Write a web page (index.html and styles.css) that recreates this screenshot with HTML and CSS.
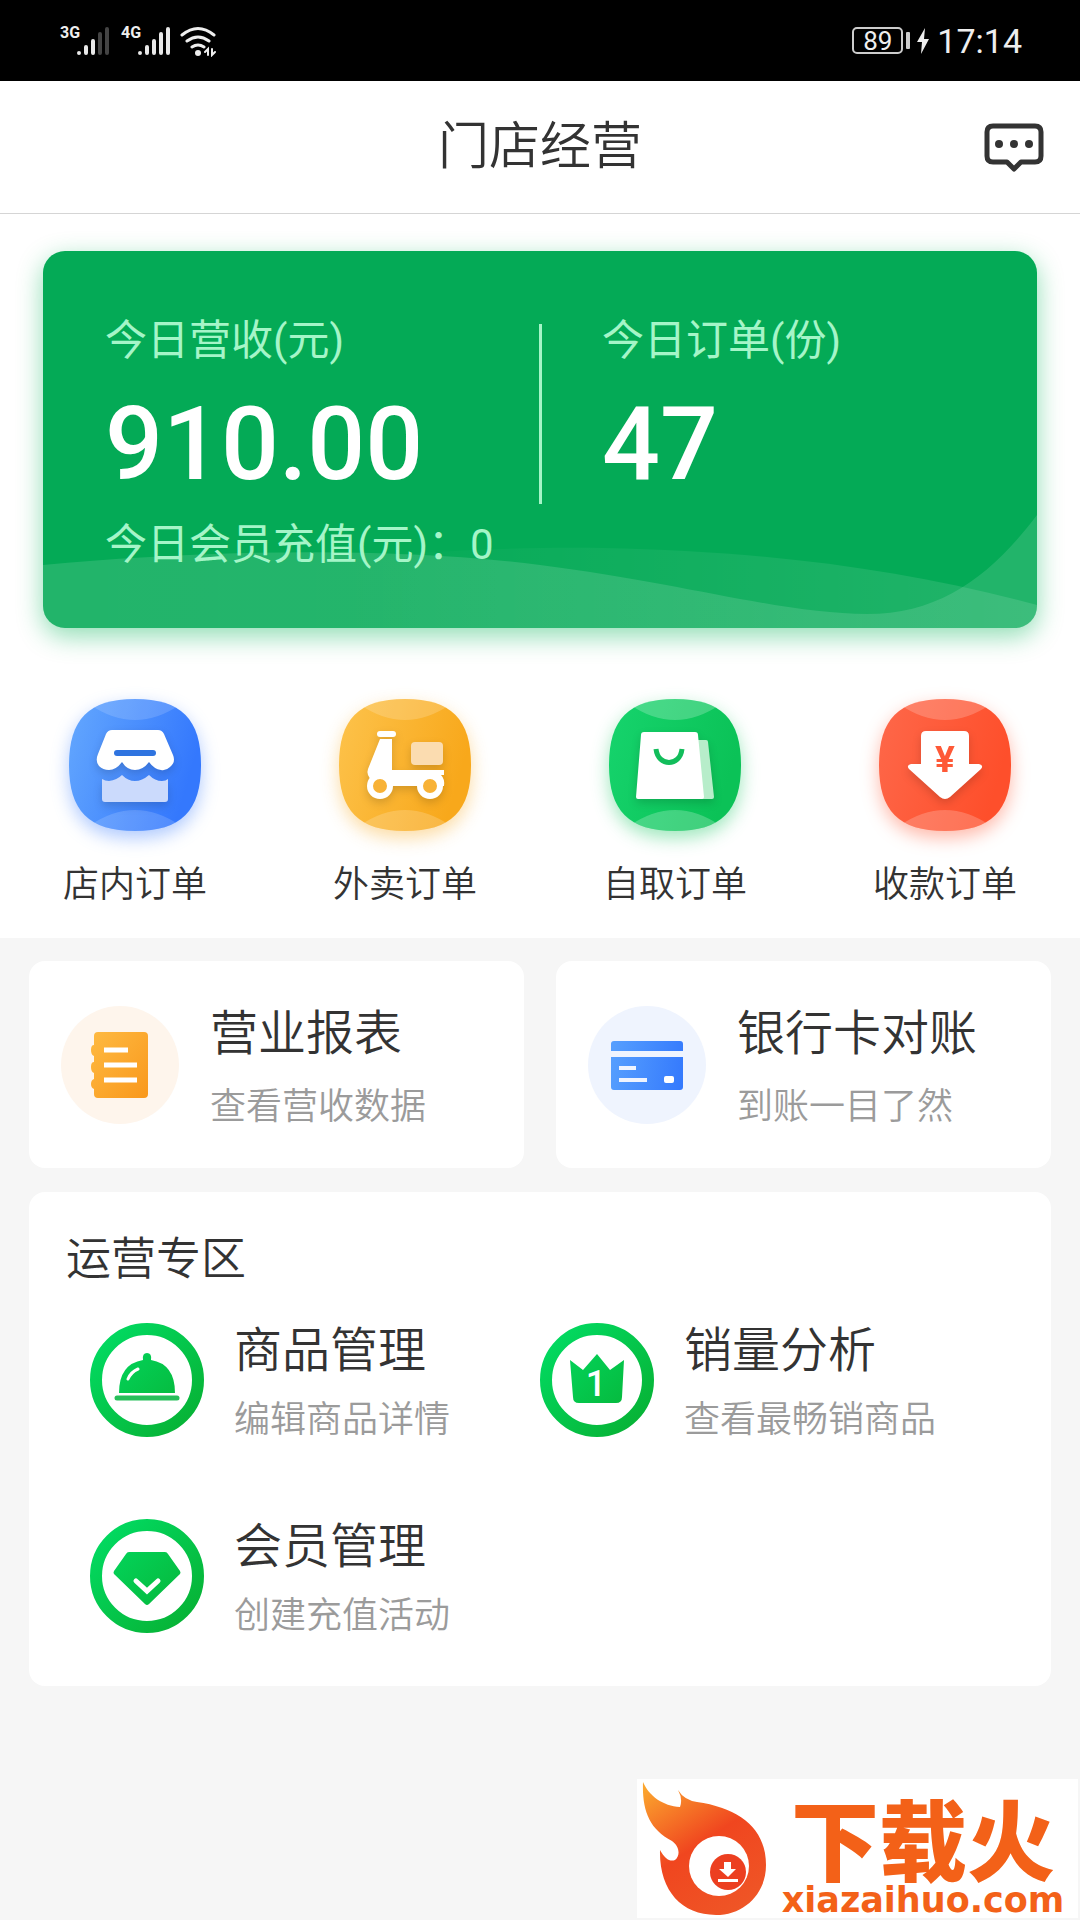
FILE: index.html
```html
<!DOCTYPE html>
<html lang="zh-CN">
<head>
    <meta charset="UTF-8">
    <meta name="viewport" content="width=device-width, initial-scale=1.0">
    <title>门店经营</title>
    <link rel="stylesheet" href="styles.css">
</head>
<body>

    <div class="status-bar">
        <div class="status-group">
            <span class="network">3G</span>
            <svg class="signal" width="32" height="32" viewBox="0 0 32 32" stroke-width="4" stroke-linecap="round">
                <path stroke="#e8e8e8" d="M2 28v0M9 22v6M16 16v12"/>
                <path stroke="#444" d="M23 9v19M30 4v24"/>
            </svg>
            <span class="network">4G</span>
            <svg class="signal" width="32" height="32" viewBox="0 0 32 32" stroke-width="4" stroke-linecap="round">
                <path stroke="#e8e8e8" d="M2 28v0M9 22v6M16 16v12M23 9v19M30 4v24"/>
            </svg>
            <svg width="38" height="32" viewBox="0 0 38 32" fill="none" stroke="#eee" stroke-width="3" stroke-linecap="round">
                <path d="M3 10q16-13 32 0M8 16q11-8 22 0M13 22q6-4 12 0"/>
                <circle cx="19" cy="28" r="3" fill="#eee" stroke="none"/>
                <path stroke-width="2" d="M29 30v-6l-3 3M33 24v6l3-3"/>
            </svg>
        </div>
        <div class="status-group">
            <span class="battery">89</span>
            <span class="battery-tip"></span>
            <svg width="12" height="26" viewBox="0 0 12 26"><path fill="#eee" d="M8 0 0 14h5L4 26l8-15H7z"/></svg>
            <span class="clock">17:14</span>
        </div>
    </div>

    <header class="header">
        <h1>门店经营</h1>
        <button class="message-btn" aria-label="消息">
            <svg width="60" height="49" viewBox="0 0 60 49" fill="none" stroke="#333" stroke-width="5" stroke-linejoin="round">
                <path d="M9 3h42q6 0 6 6v24q0 6-6 6H37l-7 7-7-7H9q-6 0-6-6V9q0-6 6-6z"/>
                <g fill="#333" stroke="none"><circle cx="15" cy="21" r="4"/><circle cx="30" cy="21" r="4"/><circle cx="45" cy="21" r="4"/></g>
            </svg>
        </button>
    </header>

    <section class="overview">
        <div class="summary">
            <svg class="waves" viewBox="0 0 994 377" preserveAspectRatio="none">
                <defs>
                    <linearGradient id="waveA"><stop offset="0" stop-color="#fff" stop-opacity=".12"/><stop offset=".5" stop-color="#fff" stop-opacity=".13"/><stop offset="1" stop-color="#fff" stop-opacity=".12"/></linearGradient>
                    <linearGradient id="waveB"><stop offset="0" stop-color="#fff" stop-opacity="0"/><stop offset="1" stop-color="#fff" stop-opacity=".12"/></linearGradient>
                </defs>
                <path fill="url(#waveA)" d="M0 314C150 300 340 294 497 314C640 332 740 363 824 363C900 363 950 322 994 264V377H0z"/>
                <path fill="url(#waveB)" d="M300 310C380 299 480 296 560 297C720 300 860 318 994 354V377H300z"/>
            </svg>
            <div class="stats">
                <div class="stat">
                    <p class="stat-label">今日营收(元)</p>
                    <p class="stat-value">910.00</p>
                </div>
                <div class="stat">
                    <p class="stat-label">今日订单(份)</p>
                    <p class="stat-value">47</p>
                </div>
            </div>
            <p class="stat-label recharge">今日会员充值(元)：0</p>
        </div>

        <nav class="quick">
            <a class="quick-item" href="#">
                <svg class="tile tile-blue" viewBox="0 0 132 132">
                    <defs>
                        <clipPath id="tile"><path d="M66 0C112 0 132 20 132 66S112 132 66 132 0 112 0 66 20 0 66 0z"/></clipPath>
                        <linearGradient id="blue" y2=".3"><stop offset="0" stop-color="#64a8fe"/><stop offset="1" stop-color="#3478fd"/></linearGradient>
                    </defs>
                    <g clip-path="url(#tile)">
                        <path fill="url(#blue)" d="M0 0h132v132H0z"/>
                        <path fill="#fff" fill-opacity=".15" d="M20 5Q66 37 112 5V0H20zM20 127Q66 95 112 127v5H20z"/>
                    </g>
                    <g class="glyph">
                        <path fill="#cbdafc" d="M33 80q3 2 7 2 8-1 13-6 6 6 13 6t14-6q6 6 13 6 4 0 6-2v20q0 3-3 3H36q-3 0-3-3z"/>
                        <path fill="#fff" d="M43 31h46q4 0 6 4l9 21q3 7-3 12-4 4-9 3-7-1-12-8-6 8-14 8t-13-8q-6 8-13 8-6 0-10-4-4-5-1-12l8-20q2-4 6-4z"/>
                        <path stroke="#2f74e0" stroke-width="6" stroke-linecap="round" d="M48 54h36"/>
                    </g>
                </svg>
                <span>店内订单</span>
            </a>
            <a class="quick-item" href="#">
                <svg class="tile tile-yellow" viewBox="0 0 132 132">
                    <defs><linearGradient id="yellow" y2=".3"><stop offset="0" stop-color="#fdc34c"/><stop offset="1" stop-color="#f8a81b"/></linearGradient></defs>
                    <g clip-path="url(#tile)">
                        <path fill="url(#yellow)" d="M0 0h132v132H0z"/>
                        <path fill="#fff" fill-opacity=".18" d="M20 5Q66 37 112 5V0H20zM20 127Q66 95 112 127v5H20z"/>
                    </g>
                    <g class="glyph">
                        <rect x="38" y="32" width="19" height="6" rx="3" fill="#fff"/>
                        <rect x="72" y="43" width="32" height="23" rx="4" fill="#fbdcb0"/>
                        <path fill="#fff" d="M41 40h12v31h52v5h-3q4 4 3 11H35l-6-11q-1-4 0-6z"/>
                        <g fill="#f8b236" stroke="#fff" stroke-width="6"><circle cx="41" cy="87" r="10"/><circle cx="91" cy="87" r="10"/></g>
                    </g>
                </svg>
                <span>外卖订单</span>
            </a>
            <a class="quick-item" href="#">
                <svg class="tile tile-green" viewBox="0 0 132 132">
                    <defs><linearGradient id="green" y2=".3"><stop offset="0" stop-color="#16d46d"/><stop offset="1" stop-color="#0bc257"/></linearGradient></defs>
                    <g clip-path="url(#tile)">
                        <path fill="url(#green)" d="M0 0h132v132H0z"/>
                        <path fill="#fff" fill-opacity=".22" d="M20 5Q66 37 112 5V0H20zM20 127Q66 95 112 127v5H20z"/>
                    </g>
                    <g class="glyph">
                        <path fill="#b7edca" d="M88 41h9q2 0 2 2l6 55q0 2-2 2H88z"/>
                        <path fill="#fff" d="M35 33h51q3 0 3 3l6 62q0 2-2 2H29q-2 0-2-2l5-62q0-3 3-3z"/>
                        <path fill="none" stroke="#12bd5b" stroke-width="5" d="M47 50c2 18 24 18 26 0"/>
                    </g>
                </svg>
                <span>自取订单</span>
            </a>
            <a class="quick-item" href="#">
                <svg class="tile tile-red" viewBox="0 0 132 132">
                    <defs><linearGradient id="red" y2=".3"><stop offset="0" stop-color="#fe684a"/><stop offset="1" stop-color="#fe4f2b"/></linearGradient></defs>
                    <g clip-path="url(#tile)">
                        <path fill="url(#red)" d="M0 0h132v132H0z"/>
                        <path fill="#fff" fill-opacity=".2" d="M20 5Q66 37 112 5V0H20zM20 127Q66 95 112 127v5H20z"/>
                    </g>
                    <g class="glyph">
                        <path fill="#fff" d="M47 32h38q5 0 5 5v28h10q5 1 2 5L71 98q-5 4-10 0L30 70q-3-4 2-5h10V37q0-5 5-5z"/>
                        <text class="yen" x="66" y="73" text-anchor="middle">¥</text>
                    </g>
                </svg>
                <span>收款订单</span>
            </a>
        </nav>
    </section>

    <main class="content">
        <div class="reports">
            <a class="report" href="#">
                <svg class="report-icon" viewBox="0 0 119 119">
                    <defs><linearGradient id="book" x2="1" y2="1"><stop offset="0" stop-color="#feba42"/><stop offset="1" stop-color="#f9981c"/></linearGradient></defs>
                    <circle cx="60" cy="60" r="59" fill="#fef5ec"/>
                    <path fill="url(#book)" d="M38 27h46q4 0 4 4v58q0 4-4 4H38q-4 0-4-4v-5q-3-1-3-5t3-5v-6q-3-1-3-6t3-5v-6q-3-1-3-6t3-5v-9q0-4 4-4z"/>
                    <path stroke="#fff" stroke-width="5" d="M44 45h24M44 60h33M44 75h33"/>
                </svg>
                <div>
                    <h2>营业报表</h2>
                    <p>查看营收数据</p>
                </div>
            </a>
            <a class="report" href="#">
                <svg class="report-icon" viewBox="0 0 119 119">
                    <defs><linearGradient id="card" gradientUnits="userSpaceOnUse" x1="24" y1="60" x2="96" y2="70"><stop offset="0" stop-color="#559efe"/><stop offset="1" stop-color="#357afd"/></linearGradient></defs>
                    <circle cx="60" cy="60" r="59" fill="#eff4fe"/>
                    <path fill="url(#card)" d="M27 36h66q3 0 3 3v7H24v-7q0-3 3-3zM24 52h72v30q0 3-3 3H27q-3 0-3-3z"/>
                    <path stroke="#eff4fe" stroke-width="4" d="M32 63h17M32 75h28"/>
                    <rect x="77" y="71" width="10" height="7" rx="2" fill="#fff"/>
                </svg>
                <div>
                    <h2>银行卡对账</h2>
                    <p>到账一目了然</p>
                </div>
            </a>
        </div>

        <section class="operations">
            <h3>运营专区</h3>
            <div class="operation-list">
                <a class="operation" href="#">
                    <svg class="operation-icon" viewBox="0 0 114 114">
                        <defs><linearGradient id="ring" gradientUnits="userSpaceOnUse" x1="15" y1="15" x2="99" y2="99"><stop offset="0" stop-color="#02d960"/><stop offset="1" stop-color="#07b336"/></linearGradient></defs>
                        <circle cx="57" cy="57" r="51" fill="none" stroke="url(#ring)" stroke-width="12"/>
                        <path fill="url(#ring)" d="M29 70q0-29 24-33-1-7 4-7t4 7q24 4 24 33z"/>
                        <path stroke="#27bf5a" stroke-width="5" stroke-linecap="round" d="M27 75h60"/>
                        <path fill="none" stroke="#fff" stroke-width="3" stroke-linecap="round" d="M38 56q3-7 10-10"/>
                    </svg>
                    <div>
                        <h2>商品管理</h2>
                        <p>编辑商品详情</p>
                    </div>
                </a>
                <a class="operation" href="#">
                    <svg class="operation-icon" viewBox="0 0 114 114">
                        <circle cx="57" cy="57" r="51" fill="none" stroke="url(#ring)" stroke-width="12"/>
                        <path fill="url(#ring)" d="m30 37 13 10L57 31l13 16 14-10-2 37q0 6-6 6H39q-6 0-6-6z"/>
                        <text class="rank" x="56" y="73" text-anchor="middle">1</text>
                    </svg>
                    <div>
                        <h2>销量分析</h2>
                        <p>查看最畅销商品</p>
                    </div>
                </a>
                <a class="operation" href="#">
                    <svg class="operation-icon" viewBox="0 0 114 114">
                        <circle cx="57" cy="57" r="51" fill="none" stroke="url(#ring)" stroke-width="12"/>
                        <path fill="url(#ring)" d="M39 33h36q2 0 3 2l12 17q1 2 0 3L59 85q-2 2-4 0L24 55q-1-1 0-3l12-17q1-2 3-2z"/>
                        <path fill="none" stroke="#fff" stroke-width="5" stroke-linecap="round" d="m46 62 11 10 11-10"/>
                    </svg>
                    <div>
                        <h2>会员管理</h2>
                        <p>创建充值活动</p>
                    </div>
                </a>
            </div>
        </section>
    </main>

    <footer class="brand">
        <svg width="131" height="139" viewBox="0 0 131 139">
            <defs>
                <linearGradient id="flame" x1=".1" y1="0" x2=".7" y2="1">
                    <stop offset="0" stop-color="#fba52e"/><stop offset=".5" stop-color="#f0461f"/><stop offset="1" stop-color="#ef5526"/>
                </linearGradient>
            </defs>
            <path fill="url(#flame)" d="M6 3C12 17 26 27 43 28Q46 20 41 11Q47 21 60 23C102 29 129 49 129 86C129 115 107 136 79 136C44 136 22 111 23 71C28 80 33 83 38 81C44 76 42 67 35 62C12 50 5 31 6 3z"/>
            <circle cx="82" cy="87" r="30" fill="#fff"/>
            <circle cx="91" cy="93" r="18" fill="#ec3f20"/>
            <path fill="#fff" d="M87 83h7v7h5l-8 8-9-8h5zM81 100h20v3H81z"/>
        </svg>
        <div class="brand-text">
            <span class="brand-name">下载火</span>
            <span class="brand-domain">xiazaihuo.com</span>
        </div>
    </footer>

</body>
</html>
```
FILE: styles.css
```css
* {
    box-sizing: border-box;
}

body {
    margin: 0;
    min-height: 100vh;
    display: flex;
    flex-direction: column;
    background-color: #f6f6f6;
    color: #333;
    font-family: Roboto, 'Noto Sans CJK SC', sans-serif;
    font-weight: 350;
}

h1, h2, h3, p {
    margin: 0;
    font-weight: inherit;
}

a {
    color: inherit;
    text-decoration: none;
}

svg {
    display: block;
    flex-shrink: 0;
}

/* Status bar */
.status-bar {
    display: flex;
    justify-content: space-between;
    align-items: center;
    height: 81px;
    padding: 0 58px 0 60px;
    background-color: #000;
    color: #eee;
    font-weight: 400;
}

.status-group {
    display: flex;
    align-items: center;
}

.network {
    width: 17px;
    margin-bottom: 16px;
    font-size: 16px;
    line-height: 16px;
    font-weight: 700;
}

.signal {
    margin-right: 12px;
}

.signal + svg {
    margin-left: -3px;
}

.battery {
    width: 51px;
    height: 27px;
    border: 2px solid #ccc;
    border-radius: 5px;
    font-size: 26px;
    line-height: 24px;
    text-align: center;
}

.battery-tip {
    width: 4px;
    height: 17px;
    margin: 0 7px 0 3px;
    border-radius: 1px;
    background-color: #ccc;
}

.clock {
    margin-left: 8px;
    font-size: 34px;
    line-height: 40px;
}

/* Header */
.header {
    display: grid;
    grid-template-columns: 1fr auto 1fr;
    align-items: center;
    height: 133px;
    padding: 0 36px;
    background-color: #fff;
    border-bottom: 1px solid #d5d5d5;
}

.header h1 {
    grid-column: 2;
    font-size: 51px;
    line-height: 60px;
}

.message-btn {
    justify-self: end;
    padding: 0;
    border: none;
    background: none;
    cursor: pointer;
}

/* Today's figures */
.overview {
    padding: 37px 0 32px;
    background-color: #fff;
}

.summary {
    position: relative;
    margin: 0 43px;
    padding: 65px 0 58px;
    border-radius: 22px;
    background-color: #04aa56;
    box-shadow: 0 8px 26px rgba(4, 180, 86, 0.45);
    overflow: hidden;
}

.waves {
    position: absolute;
    inset: 0;
    width: 100%;
    height: 100%;
}

.stats {
    position: relative;
    display: grid;
    grid-template-columns: 1fr 1fr;
    padding-bottom: 7px;
}

.stats::after {
    content: '';
    position: absolute;
    top: 8px;
    bottom: 2px;
    left: 50%;
    width: 3px;
    margin-left: -1px;
    background-color: #a5f5c8;
}

.stat {
    padding-left: 62px;
}

.stat-label {
    color: #a5f5c8;
    font-size: 42px;
    font-weight: 400;
    line-height: 50px;
}

.stat-value {
    margin-top: 23px;
    color: #fff;
    font-size: 102px;
    font-weight: 500;
    line-height: 110px;
}

.recharge {
    position: relative;
    margin-top: 14px;
    padding-left: 62px;
}

/* Quick entries */
.quick {
    display: grid;
    grid-template-columns: repeat(4, 1fr);
    margin-top: 71px;
}

.quick-item {
    display: flex;
    flex-direction: column;
    align-items: center;
    gap: 33px;
    font-size: 36px;
    line-height: 42px;
}

.tile {
    width: 132px;
    height: 132px;
    overflow: visible;
}

.tile-blue {
    filter: drop-shadow(0 7px 9px rgba(52, 120, 253, 0.4));
}

.tile-yellow {
    filter: drop-shadow(0 7px 9px rgba(248, 168, 27, 0.4));
}

.tile-green {
    filter: drop-shadow(0 7px 9px rgba(11, 194, 87, 0.4));
}

.tile-red {
    filter: drop-shadow(0 7px 9px rgba(254, 79, 43, 0.4));
}

.glyph {
    filter: drop-shadow(0 4px 4px rgba(0, 0, 0, 0.15));
}

.yen {
    fill: #fe5937;
    font-size: 37px;
    font-weight: 700;
}

/* Cards */
.content {
    display: flex;
    flex-direction: column;
    gap: 24px;
    padding: 23px 29px;
}

.reports {
    display: grid;
    grid-template-columns: 1fr 1fr;
    gap: 32px;
}

.report {
    display: flex;
    align-items: center;
    gap: 31px;
    height: 207px;
    padding: 0 31px;
    border-radius: 16px;
    background-color: #fff;
}

.report-icon {
    width: 119px;
    height: 119px;
}

.report h2,
.operation h2 {
    font-size: 48px;
    line-height: 56px;
}

.report p,
.operation p {
    color: #9b9b9b;
    font-size: 36px;
    line-height: 42px;
}

.report div,
.operation div {
    padding-top: 4px;
}

.report p {
    margin-top: 24px;
}

.operations {
    padding: 45px 31px 12px 37px;
    border-radius: 16px;
    background-color: #fff;
}

.operations h3 {
    font-size: 45px;
    line-height: 45px;
}

.operation-list {
    display: grid;
    grid-template-columns: 450px 1fr;
    padding-left: 24px;
}

.operation {
    display: flex;
    align-items: center;
    gap: 30px;
    height: 196px;
}

.operation-icon {
    width: 114px;
    height: 114px;
}

.operation p {
    margin-top: 20px;
}

.rank {
    fill: #fff;
    font-size: 36px;
    font-weight: 500;
}

/* Brand badge */
.brand {
    display: flex;
    align-self: flex-end;
    width: 441px;
    height: 139px;
    margin: auto 2px 2px 0;
    background-color: #fff;
    color: #f36118;
}

.brand-text {
    display: flex;
    flex: 1;
    flex-direction: column;
    justify-content: flex-end;
    align-items: center;
    padding-bottom: 4px;
}

.brand-name {
    font-size: 88px;
    font-weight: 900;
    line-height: 84px;
}

.brand-domain {
    font-family: 'DejaVu Sans', sans-serif;
    font-size: 35px;
    font-weight: 700;
    line-height: 28px;
}
```
